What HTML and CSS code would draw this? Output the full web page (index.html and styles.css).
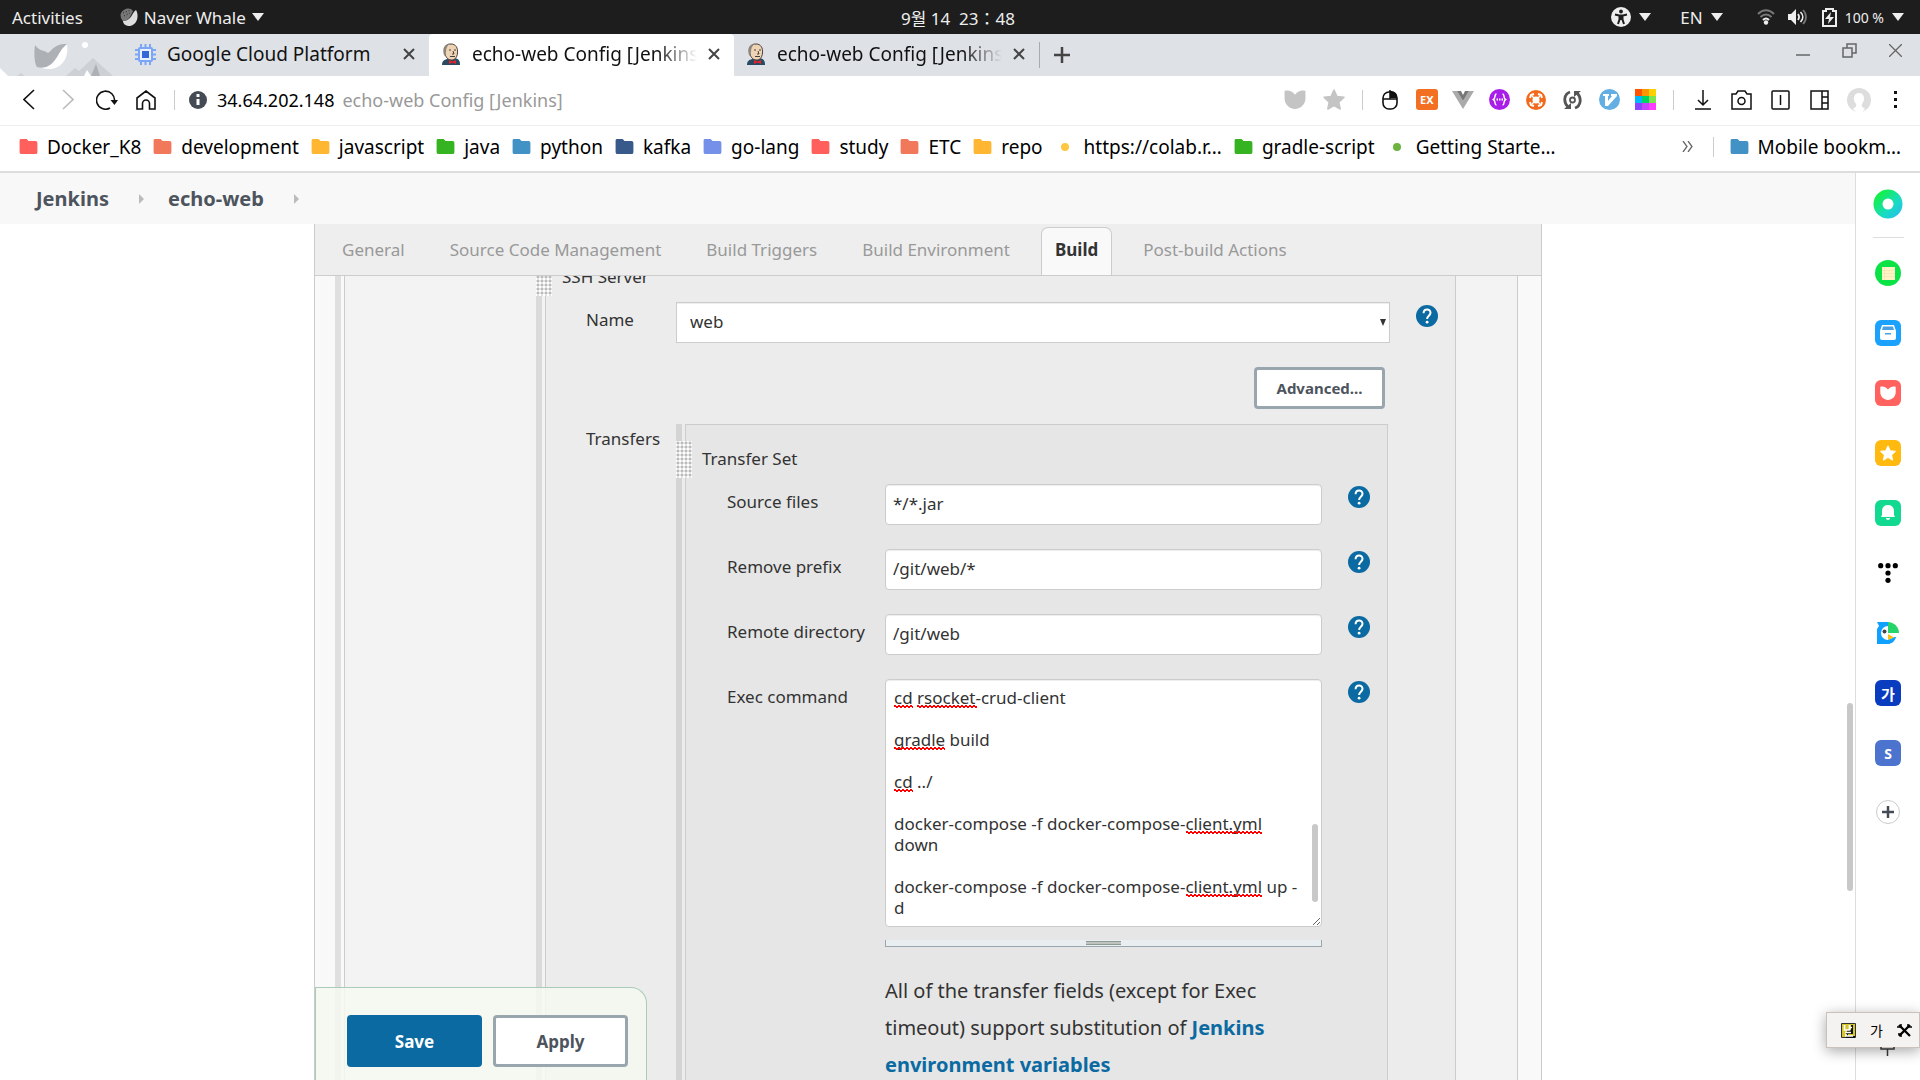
FILE: index.html
```html
<!DOCTYPE html>
<html lang="en">
<head>
  <meta charset="UTF-8" />
  <meta name="viewport" content="width=device-width, initial-scale=1.0"/>
  <title>echo-web Config [Jenkins]</title>
  <link rel="stylesheet" href="styles.css">
</head>
<body>

  <!-- shared icons -->
  <svg class="sprite" aria-hidden="true">
    <symbol id="folder" viewBox="0 0 19 16"><path fill="currentColor" d="M1.500 0h6l2 2h7.500a2 2 0 0 1 2 2v10a2 2 0 0 1-2 2H2a2 2 0 0 1-2-2V1.500A1.500 1.500 0 0 1 1.500 0z"/></symbol>
    <symbol id="caret" viewBox="0 0 12 8"><path fill="currentColor" d="M0 0h12L6 8z"/></symbol>
    <symbol id="cross" viewBox="0 0 12 12"><path fill="none" stroke="currentColor" stroke-width="2" d="M1 1l10 10M11 1L1 11"/></symbol>
    <symbol id="crumb" viewBox="0 0 5 10"><path fill="#bbb" d="M0 0l5 5-5 5z"/></symbol>
    <symbol id="help" viewBox="0 0 22 22"><circle cx="11" cy="11" r="11" fill="#0b6aa2"/><path fill="none" stroke="#fff" stroke-width="2" d="M7.600 8.200C7.600 3.300 14.500 3.400 14.500 7.700c0 3-3.400 3.100-3.400 6.300"/><circle cx="11.100" cy="17.200" r="1.400" fill="#fff"/></symbol>
    <symbol id="jenkins" viewBox="0 0 20 22">
      <path fill="#284a63" d="M1 22c0-4 2-5 5-6l8-1c4 1 5 3 5 7z"/>
      <path fill="#eed3b5" stroke="#4a4038" d="M3.500 9C3 3 6 1 10 1c5 0 7 4 6.500 9-.5 5-3 7-6 7-4 0-6-3-7-8z"/>
      <path fill="#8c857c" d="M3 12C1 6 3 1 9 .5 6 3 5 5 5 9l-1 4z"/>
      <path fill="none" stroke="#4a4038" d="M8 7h2M13 7h2M12 8l1 3h-2M9 13.500h5"/>
      <path fill="#e3252b" d="M8 17l3.500 1.500L15 17v4l-3.500-1.500L8 21z"/>
    </symbol>
    <symbol id="shield" viewBox="0 0 22 20"><path fill="currentColor" d="M0 1c4-1 8 0 11 4 3-4 7-5 11-4v8c0 6-5 11-11 11S0 15 0 9z"/></symbol>
    <symbol id="star" viewBox="0 0 22 21"><path fill="currentColor" stroke="currentColor" stroke-linejoin="round" stroke-width="1.500" d="M11 1l3 6.500 7 .8-5.200 4.800L17.200 20 11 16.500 4.800 20l1.400-6.900L1 8.300l7-.8z"/></symbol>
  </svg>

  <!-- desktop top bar -->
  <header class="topbar">
    <div class="topbar-left">
      <span>Activities</span>
      <span class="topbar-app">
        <svg width="18" height="18" viewBox="0 0 18 18"><path fill="#777" d="M1 5C4 0 10-1 13 3l-3 6c-2 3-5 4-7 4C1 11 0 8 1 5z"/><path fill="#ddd" d="M10 10c2-2 3-6 6-8 3 5 2 14-6 16-4 0-7-2-7-5 3 0 5-1 7-3z"/><path stroke="#222" stroke-dasharray="1 2" d="M3 5l8-3M4 8l6-3"/></svg>
        Naver Whale
        <svg class="caret" width="12" height="8"><use href="#caret"/></svg>
      </span>
    </div>
    <div class="topbar-clock" lang="ko">9월 14&nbsp; 23：48</div>
    <div class="topbar-right">
      <svg width="20" height="20" viewBox="0 0 20 20"><circle cx="10" cy="10" r="10" fill="#eee"/><circle cx="10" cy="4.500" r="1.900" fill="#1d1d1d"/><path fill="none" stroke="#1d1d1d" stroke-width="2" d="M4 7.500l4 1h4l4-1M8.500 8.500v4L7 17M11.500 8.500v4L13 17M10 8v5"/></svg>
      <svg class="caret" width="12" height="8"><use href="#caret"/></svg>
      <span class="lang">EN</span>
      <svg class="caret" width="12" height="8"><use href="#caret"/></svg>
      <svg class="wifi" width="18" height="16" viewBox="0 0 18 16"><g fill="none" stroke-width="2"><path stroke="#777" d="M1 5c5-5 11-5 16 0"/><path stroke="#777" d="M3.500 8c3.500-3.500 7.500-3.500 11 0"/><path stroke="#eee" d="M6 11c2-2 4-2 6 0"/></g><circle cx="9" cy="13.500" r="2.200" fill="#eee"/></svg>
      <svg class="volume" width="19" height="16" viewBox="0 0 19 16"><path fill="#eee" d="M0 5h3l5-5v16l-5-5H0z"/><g fill="none" stroke-width="1.700"><path stroke="#eee" d="M10 5c1.500 2 1.500 4 0 6M12.500 3c3 3 3 7 0 10"/><path stroke="#777" d="M15 1c4 4 4 10 0 14"/></g></svg>
      <svg class="battery" width="15" height="19" viewBox="0 0 15 19"><path fill="none" stroke="#eee" stroke-width="2" d="M1 3h3V1h7v2h3v15H1z"/><path fill="#eee" d="M9 4l-6 7h4l-1 5 6-7H8z"/></svg>
      <span class="percent">100 %</span>
      <svg class="caret" width="12" height="8"><use href="#caret"/></svg>
    </div>
  </header>

  <!-- browser tabs -->
  <div class="tabstrip">
    <svg class="whale" width="114" height="42" viewBox="0 0 114 42">
      <path fill="#fff" d="M0 34l8 8H0z"/><path fill="#cdd0d4" d="M17 42l4-3 4 3zM66 42l9-8 4 3 14-13 20 18z"/>
      <path fill="#adb0b5" d="M91 42l5-12 4 12z"/><path fill="#fff" d="M84 42l3-6 4 6z"/>
      <circle cx="85" cy="11" r="3" fill="#fff"/>
      <path fill="#fff" d="M67 10c2 13-4 24-17 25-6 0-10-1-13-3l16-8z"/>
      <path fill="#adb0b5" d="M35 11c4 6 9 5 13 8 5-4 8-10 19-9-6 4-8 11-12 16-5 7-12 9-18 7-3-5-3-15-2-22z"/>
    </svg>
    <div class="tab tab-first">
      <svg width="21" height="21" viewBox="0 0 21 21"><path stroke="#7ba5f5" stroke-width="2" d="M6 0v21M10.500 0v21M15 0v21M0 6h21M0 10.500h21M0 15h21"/><rect x="3" y="3" width="15" height="15" rx="2" fill="#7ba5f5"/><rect x="5" y="5" width="11" height="11" fill="#e8f0ff"/><rect x="7" y="7" width="7" height="7" fill="#3367d6"/></svg>
      <span class="tab-title">Google Cloud Platform</span>
      <button class="tab-close" aria-label="Close tab"><svg width="12" height="12"><use href="#cross"/></svg></button>
    </div>
    <div class="tab active">
      <svg width="20" height="22"><use href="#jenkins"/></svg>
      <span class="tab-title fade">echo-web Config [Jenkins]</span>
      <button class="tab-close" aria-label="Close tab"><svg width="12" height="12"><use href="#cross"/></svg></button>
    </div>
    <div class="tab">
      <svg width="20" height="22"><use href="#jenkins"/></svg>
      <span class="tab-title fade">echo-web Config [Jenkins]</span>
      <button class="tab-close" aria-label="Close tab"><svg width="12" height="12"><use href="#cross"/></svg></button>
    </div>
    <button class="new-tab" aria-label="New tab"><svg width="16" height="16" viewBox="0 0 16 16"><path stroke="#444" stroke-width="2.500" d="M8 0v16M0 8h16"/></svg></button>
    <div class="window-buttons">
      <button aria-label="Minimize"><svg width="14" height="14" viewBox="0 0 14 14"><path stroke="#666" stroke-width="1.500" d="M0 12h14"/></svg></button>
      <button aria-label="Restore"><svg width="15" height="15" viewBox="0 0 15 15"><path fill="none" stroke="#666" stroke-width="1.500" d="M1 5h9v9H1zM5 5V1h9v9h-4"/></svg></button>
      <button aria-label="Close"><svg width="13" height="13" viewBox="0 0 13 13"><path stroke="#666" stroke-width="1.300" d="M0 0l13 13M13 0L0 13"/></svg></button>
    </div>
  </div>

  <!-- address bar -->
  <nav class="navbar">
    <button aria-label="Back"><svg width="12" height="21" viewBox="0 0 12 21"><path fill="none" stroke="#111" stroke-width="1.600" d="M11 1L1 10.500 11 20"/></svg></button>
    <button aria-label="Forward"><svg width="12" height="21" viewBox="0 0 12 21"><path fill="none" stroke="#bbb" stroke-width="1.600" d="M1 1l10 9.500L1 20"/></svg></button>
    <button aria-label="Reload"><svg width="22" height="20" viewBox="0 0 22 20"><path fill="none" stroke="#111" stroke-width="1.600" d="M14 18A9 9 0 1 1 18.500 11"/><path fill="#111" d="M14.500 10H22l-3.500 5z"/></svg></button>
    <button aria-label="Home"><svg width="20" height="20" viewBox="0 0 20 20"><path fill="none" stroke="#111" stroke-width="1.600" d="M1 8l9-7 9 7v11h-5.500v-5.500a3.500 3.500 0 0 0-7 0V19H1z"/></svg></button>
    <span class="divider"></span>
    <svg class="info" width="18" height="18" viewBox="0 0 18 18"><circle cx="9" cy="9" r="9" fill="#444b54"/><path stroke="#fff" stroke-width="3" d="M9 3v3M9 8v6"/></svg>
    <a class="host" href="#">34.64.202.148</a>
    <span class="page-title">echo-web Config [Jenkins]</span>
    <div class="nav-marks">
      <button aria-label="Safe browsing"><svg width="22" height="19"><use href="#shield"/></svg></button>
      <button aria-label="Bookmark page"><svg width="22" height="21"><use href="#star"/></svg></button>
    </div>
    <span class="divider"></span>
    <div class="extensions">
      <button aria-label="Mouse gesture"><svg width="16" height="20" viewBox="0 0 16 20"><path fill="#111" d="M8 1c5 0 7 2 7 7H8z"/><rect x="1" y="2" width="14" height="17" rx="6" fill="none" stroke="#111" stroke-width="1.600"/><path stroke="#111" stroke-width="1.500" d="M1 9h14M8 0v9"/></svg></button>
      <button class="ext-ex">EX</button>
      <button aria-label="Vue"><svg width="22" height="18" viewBox="0 0 22 18"><path fill="#aaa" d="M0 0h5l6 10 6-10h5L11 18z"/><path fill="#777" d="M5 0h4l2 4 2-4h4l-6 10z"/></svg></button>
      <button aria-label="GraphQL"><svg width="21" height="21" viewBox="0 0 21 21"><circle cx="10.500" cy="10.500" r="10.500" fill="#a81ee8"/><path fill="none" stroke="#fff" stroke-width="1.500" d="M7.500 5C5 5 7 9 4.500 10.500 7 12 5 16 7.500 16M13.500 5c2.500 0 .5 4 3 5.500-2.500 1.500-.5 5.500-3 5.500"/><path stroke="#fff" stroke-width="2" d="M7.500 10.500h1.500M10 10.500h1.500M12.500 10.500H14"/></svg></button>
      <button aria-label="Hub"><svg width="20" height="20" viewBox="0 0 20 20"><circle cx="10" cy="10" r="10" fill="#f26b1d"/><circle cx="10" cy="10" r="3.500" fill="#fff"/><path stroke="#fff" stroke-width="1.300" d="M6 6l8 8M14 6l-8 8"/><path fill="none" stroke="#fff" stroke-width="2" d="M4 8l1-3 3-1M12 4l3 1 1 3M16 12l-1 3-3 1M8 16l-3-1-1-3"/></svg></button>
      <button aria-label="Sync"><svg width="19" height="20" viewBox="0 0 19 20"><path fill="none" stroke="#555" stroke-width="2.800" d="M7 2C1 4 0 12 5 17M12 18c6-2 7-10 2-15"/><path fill="#555" d="M1 19h7v-6zM18 1h-7v6z"/><circle cx="9.500" cy="10" r="2.500" fill="none" stroke="#555" stroke-width="1.800"/></svg></button>
      <button aria-label="Vimium"><svg width="21" height="21" viewBox="0 0 21 21"><circle cx="10.500" cy="10.500" r="10.500" fill="#63aee3"/><path fill="#fff" d="M4 5h6v2H9v5l4-5h-1V5h6v2L9 17H6V7H4z"/></svg></button>
      <button aria-label="Color picker"><svg width="21" height="21" viewBox="0 0 21 21"><path fill="#ff5500" d="M0 0h7v7H0z"/><path fill="#ff9500" d="M7 0h7v7H7z"/><path fill="#ffd000" d="M14 0h7v7h-7z"/><path fill="#00b8ff" d="M0 7h7v7H0z"/><path fill="#00d564" d="M7 7h7v7H7z"/><path fill="#7de34f" d="M14 7h7v7h-7z"/><path fill="#8844ff" d="M0 14h7v7H0z"/><path fill="#c542ff" d="M7 14h7v7H7z"/><path fill="#ff3dff" d="M14 14h7v7h-7z"/></svg></button>
    </div>
    <span class="divider"></span>
    <div class="tools">
      <button aria-label="Downloads"><svg width="18" height="20" viewBox="0 0 18 20"><path fill="none" stroke="#111" stroke-width="1.500" d="M9 0v15M4 10l5 5 5-5M1 19h16"/></svg></button>
      <button aria-label="Capture"><svg width="21" height="20" viewBox="0 0 21 20"><path fill="none" stroke="#111" stroke-width="1.500" d="M1 4h4l2-3h7l2 3h4v15H1z"/><circle cx="10.500" cy="11" r="3.500" fill="none" stroke="#111" stroke-width="1.500"/></svg></button>
      <button aria-label="Split"><svg width="19" height="20" viewBox="0 0 19 20"><rect x="1" y="1" width="17" height="18" rx="1" fill="none" stroke="#111" stroke-width="1.500"/><path stroke="#111" stroke-width="1.500" d="M9.500 5v10"/></svg></button>
      <button aria-label="Sidebar"><svg width="19" height="20" viewBox="0 0 19 20"><path fill="none" stroke="#111" stroke-width="1.500" d="M1 1h11v18H1zM12 1h6v18h-6M12 7h6M12 13h6"/></svg></button>
      <button aria-label="Profile"><svg width="24" height="24" viewBox="0 0 24 24"><circle cx="12" cy="12" r="12" fill="#ddd"/><path fill="#fff" d="M6 21c1-2 4-1 3-5-4-5-2-11 3-11s7 6 3 11c-1 4 2 3 3 5l-3 3H9z"/></svg></button>
      <button class="more" aria-label="Menu"><svg width="4" height="18" viewBox="0 0 4 18"><path fill="#111" d="M0 0h3v3H0zM0 7h3v3H0zM0 14h3v3H0z"/></svg></button>
    </div>
  </nav>

  <!-- bookmarks -->
  <div class="bookmarks">
    <a href="#"><svg class="red" width="19" height="15"><use href="#folder"/></svg>Docker_K8</a>
    <a href="#"><svg class="coral" width="19" height="15"><use href="#folder"/></svg>development</a>
    <a href="#"><svg class="amber" width="19" height="15"><use href="#folder"/></svg>javascript</a>
    <a href="#"><svg class="green" width="19" height="15"><use href="#folder"/></svg>java</a>
    <a href="#"><svg class="blue" width="19" height="15"><use href="#folder"/></svg>python</a>
    <a href="#"><svg class="navy" width="19" height="15"><use href="#folder"/></svg>kafka</a>
    <a href="#"><svg class="indigo" width="19" height="15"><use href="#folder"/></svg>go-lang</a>
    <a href="#"><svg class="red" width="19" height="15"><use href="#folder"/></svg>study</a>
    <a href="#"><svg class="coral" width="19" height="15"><use href="#folder"/></svg>ETC</a>
    <a href="#"><svg class="amber" width="19" height="15"><use href="#folder"/></svg>repo</a>
    <a href="#"><span class="dot dot-yellow"></span>https://colab.r…</a>
    <a href="#"><svg class="green" width="19" height="15"><use href="#folder"/></svg>gradle-script</a>
    <a href="#"><span class="dot dot-green"></span>Getting Starte…</a>
    <button class="overflow" aria-label="More bookmarks"><svg width="11" height="11" viewBox="0 0 11 11"><path fill="none" stroke="#666" stroke-width="1.300" d="M1 0l4 5.500L1 11M6 0l4 5.500L6 11"/></svg></button>
    <span class="divider"></span>
    <a href="#"><svg class="blue" width="19" height="15"><use href="#folder"/></svg>Mobile bookm…</a>
  </div>

  <div class="window">
    <div class="page">
      <div class="breadcrumb">
        <a href="#">Jenkins</a>
        <svg width="5" height="10"><use href="#crumb"/></svg>
        <a href="#">echo-web</a>
        <svg width="5" height="10"><use href="#crumb"/></svg>
      </div>

      <main class="config">
        <div class="config-tabs">
          <a href="#">General</a>
          <a href="#">Source Code Management</a>
          <a href="#">Build Triggers</a>
          <a href="#">Build Environment</a>
          <a href="#" class="active">Build</a>
          <a href="#">Post-build Actions</a>
        </div>

        <form class="config-body">
          <div class="chunk chunk-step">
            <div class="chunk-inner">

              <div class="chunk chunk-server">
                <span class="handle"></span>
                <div class="chunk-inner">
                  <div class="server-title">SSH Server</div>
                  <div class="row">
                    <label for="name">Name</label>
                    <div class="select-wrap">
                      <select id="name"><option>web</option></select>
                    </div>
                    <a class="help" href="#" aria-label="Help: Name"><svg width="22" height="22"><use href="#help"/></svg></a>
                  </div>
                  <div class="advanced">
                    <button type="button">Advanced...</button>
                  </div>

                  <div class="row row-transfers">
                    <div class="row-label">Transfers</div>
                    <div class="chunk chunk-transfer">
                      <span class="handle"></span>
                      <div class="chunk-inner">
                        <div class="transfer-title">Transfer Set</div>
                        <div class="row">
                          <label for="source">Source files</label>
                          <input id="source" type="text" value="*/*.jar">
                          <a class="help" href="#" aria-label="Help: Source files"><svg width="22" height="22"><use href="#help"/></svg></a>
                        </div>
                        <div class="row">
                          <label for="prefix">Remove prefix</label>
                          <input id="prefix" type="text" value="/git/web/*">
                          <a class="help" href="#" aria-label="Help: Remove prefix"><svg width="22" height="22"><use href="#help"/></svg></a>
                        </div>
                        <div class="row">
                          <label for="remote">Remote directory</label>
                          <input id="remote" type="text" value="/git/web">
                          <a class="help" href="#" aria-label="Help: Remote directory"><svg width="22" height="22"><use href="#help"/></svg></a>
                        </div>
                        <div class="row">
                          <label for="exec">Exec command</label>
                          <div class="exec">
                            <div class="exec-box">
                              <textarea id="exec" spellcheck="false">cd rsocket-crud-client

gradle build

cd ../

docker-compose -f docker-compose-client.yml down

docker-compose -f docker-compose-client.yml up -d</textarea>
                              <!-- spelling marks -->
                              <i class="typo typo-cd1"></i>
                              <i class="typo typo-rsocket"></i>
                              <i class="typo typo-gradle"></i>
                              <i class="typo typo-cd2"></i>
                              <i class="typo typo-yml1"></i>
                              <i class="typo typo-yml2"></i>
                              <i class="exec-thumb"></i>
                            </div>
                            <div class="resizer"><span></span></div>
                            <p>All of the transfer fields (except for Exec timeout) support substitution of <a href="#">Jenkins environment variables</a></p>
                          </div>
                          <a class="help" href="#" aria-label="Help: Exec command"><svg width="22" height="22"><use href="#help"/></svg></a>
                        </div>
                      </div>
                    </div>
                  </div>
                </div>
              </div>

            </div>
          </div>
        </form>

        <div class="save-bar">
          <button class="save">Save</button>
          <button class="apply">Apply</button>
        </div>
      </main>

      <span class="page-thumb"></span>
    </div>

    <!-- whale side bar -->
    <aside class="sidebar">
      <button aria-label="Green dot"><svg width="30" height="30" viewBox="0 0 30 30"><defs><linearGradient id="ring" x1="0" y1="0" x2="1" y2="1"><stop offset=".2" stop-color="#14ee4e"/><stop offset=".6" stop-color="#18dcc0"/><stop offset="1" stop-color="#28b8f8"/></linearGradient></defs><circle cx="15" cy="15" r="14.500" fill="url(#ring)"/><circle cx="15" cy="15" r="5.500" fill="#fff"/></svg></button>
      <hr>
      <button aria-label="Memo"><svg width="26" height="26" viewBox="0 0 26 26"><circle cx="13" cy="13" r="13" fill="#0be246"/><rect x="7" y="7" width="13" height="13" fill="#fdf3c4"/><path stroke="#efe3b0" stroke-width=".6" d="M9.500 7v13M7 10.500h13M7 13.500h13M7 16.500h13"/></svg></button>
      <button aria-label="Drawer"><svg width="26" height="26" viewBox="0 0 26 26"><rect width="26" height="26" rx="6" fill="#1ba2ff"/><path fill="#fff" d="M7 5h12l2 6v7a2 2 0 0 1-2 2H7a2 2 0 0 1-2-2v-7z"/><path fill="#4a9fe0" d="M8 6.500h10l1 3.500H7zM10 13h6v1.500h-6z"/></svg></button>
      <button class="cat" aria-label="Shield"><svg width="16" height="14"><use href="#shield"/></svg></button>
      <button class="fav" aria-label="Favorites"><svg width="16" height="16"><use href="#star"/></svg></button>
      <button aria-label="Alerts"><svg width="26" height="26" viewBox="0 0 26 26"><rect width="26" height="26" rx="6" fill="#12d990"/><path fill="#fff" d="M13 5c4 0 6 2.500 6 6v4l1 2H6l1-2v-4c0-3.500 2-6 6-6zM11 18h4a2 2 0 0 1-4 0z"/></svg></button>
      <button aria-label="Tving"><svg width="20" height="20" viewBox="0 0 20 20"><circle cx="2.700" cy="2.700" r="2.600"/><circle cx="10" cy="2.700" r="2.600"/><circle cx="17.300" cy="2.700" r="2.600"/><circle cx="10" cy="10" r="2.600"/><circle cx="10" cy="17.300" r="2.600"/></svg></button>
      <button aria-label="Papago"><svg width="22" height="22" viewBox="0 0 22 22"><path fill="#10a0ff" d="M0 0h11v16l8-1c-2 5-5 7-9 7H0V7l2-3z"/><circle cx="11" cy="11" r="7" fill="#fff"/><path fill="#25d46a" d="M11 0c6 0 11 5 11 11H11z"/><path fill="#ffbe0b" d="M11 12l6 3.500-6 2.500z"/><path fill="#10a0ff" d="M11 18l8-3c-2 5-5 7-9 7z"/><circle cx="7.500" cy="9.500" r="2" fill="#3d4550"/></svg></button>
      <button class="dict" lang="ko">가</button>
      <button class="ess">S</button>
      <button class="plus" aria-label="Add"><svg width="12" height="12" viewBox="0 0 12 12"><path stroke="#444b54" stroke-width="2.500" d="M6 0v12M0 6h12"/></svg></button>
    </aside>
  </div>

  <!-- input method panel -->
  <div class="ime">
    <svg width="15" height="15" viewBox="0 0 15 15"><path fill="#d4c62c" stroke="#333" d="M.5.500h14v14H.5z"/><path fill="none" stroke="#111" stroke-width="2" d="M6 8h5v2H6v4h8M11 2v5"/><path fill="none" stroke="#fff" stroke-width="1.700" d="M3.500 2v5h5V2M8.500 4.500H11M4 9.500h6M5 11v2h7"/></svg>
    <span lang="ko">가</span>
    <svg width="15" height="15" viewBox="0 0 15 15"><path stroke="#000" stroke-width="2.300" d="M2 2l11 11M13 2L2 13"/><path fill="none" stroke="#000" stroke-width="1.500" d="M4 1v3H0M11 1v3h4M1 11h3v3"/></svg>
  </div>
  <svg class="ime-shadow-icon" width="16" height="10" viewBox="0 0 16 10"><path fill="none" stroke="#333" stroke-width="1.500" d="M1 0v2h13V0M7.500 2v7"/></svg>

</body>
</html>
```
FILE: styles.css
```css
* {
  box-sizing: border-box;
}

body {
  margin: 0;
  height: 100vh;
  display: flex;
  flex-direction: column;
  overflow: hidden;
  font-family: "Noto Sans", "Noto Sans CJK KR", sans-serif;
  font-size: 17px;
  color: #333;
  background: #fff;
}

a {
  color: inherit;
  text-decoration: none;
}

button {
  font-family: inherit;
  color: inherit;
  padding: 0;
  border: none;
  background: none;
  display: flex;
  align-items: center;
  justify-content: center;
}

svg {
  flex: none;
  display: block;
}

.sprite {
  position: absolute;
  width: 0;
  height: 0;
}

.divider {
  flex: none;
  width: 1px;
  height: 20px;
  background: #ccc;
}

/* desktop top bar */
.topbar {
  height: 34px;
  flex: none;
  display: grid;
  grid-template-columns: 1fr auto 1fr;
  align-items: center;
  padding: 0 16px 0 12px;
  background: #1d1d1d;
  color: #eee;
}

.topbar-left,
.topbar-app,
.topbar-right {
  display: flex;
  align-items: center;
}

.topbar-left {
  gap: 37px;
}

.topbar-app {
  gap: 6px;
}

.topbar-right {
  justify-content: flex-end;
}

.topbar-right .caret {
  margin-left: 8px;
}

.lang {
  margin-left: 29px;
}

.wifi {
  margin-left: 34px;
}

.volume {
  margin-left: 13px;
}

.battery {
  margin: 0 8px 0 15px;
}

.percent {
  font-size: 14px;
}

/* browser tabs */
.tabstrip {
  height: 42px;
  flex: none;
  display: flex;
  align-items: center;
  background: #dee1e6;
  font-size: 19px;
  color: #111;
}

.tab {
  width: 305px;
  height: 42px;
  display: flex;
  align-items: center;
  gap: 11px;
  padding: 0 14px 2px 12px;
}

.tab-first {
  width: 315px;
  padding-left: 21px;
}

.tab.active {
  background: #fff;
  border-radius: 4px 4px 0 0;
}

.tab-title {
  flex: 1;
  white-space: nowrap;
  overflow: hidden;
}

.tab-title.fade {
  -webkit-mask-image: linear-gradient(to left, transparent, #000 40px);
  mask-image: linear-gradient(to left, transparent, #000 40px);
}

.tab-close {
  color: #444;
}

.new-tab {
  height: 26px;
  padding: 0 14px;
  border-left: 1px solid #aaa;
}

.window-buttons {
  margin-left: auto;
  display: flex;
  padding: 0 2px 10px 0;
}

.window-buttons button {
  width: 46px;
}

/* address bar */
.navbar {
  height: 50px;
  flex: none;
  display: flex;
  align-items: center;
  padding: 0 6px 2px 9px;
  border-bottom: 1px solid #eee;
}

.navbar > button {
  width: 39px;
  height: 32px;
}

.navbar > .divider {
  margin: 0 9px;
}

.info {
  margin: 0 10px 0 5px;
}

.host {
  color: #000;
  font-size: 18px;
}

.page-title {
  margin-left: 8px;
  color: #999;
  font-size: 18px;
}

.nav-marks {
  margin-left: auto;
  display: flex;
  color: #c4c4c4;
}

.nav-marks button,
.tools button {
  width: 39px;
}

.extensions {
  width: 292px;
  display: grid;
  grid-template-columns: repeat(8, 1fr);
  justify-items: center;
  align-items: center;
}

.ext-ex {
  width: 22px;
  height: 21px;
  border-radius: 3px;
  background: #f36f21;
  color: #fff;
  font-size: 11px;
  font-weight: bold;
}

.tools {
  display: flex;
}

.tools .more {
  width: 36px;
}

/* bookmarks */
.bookmarks {
  height: 47px;
  flex: none;
  display: flex;
  align-items: center;
  gap: 12px;
  padding: 0 19px 4px;
  border-bottom: 2px solid #ddd;
  font-size: 19px;
  color: #000;
  white-space: nowrap;
}

.bookmarks a {
  display: flex;
  align-items: center;
  gap: 9px;
}

.bookmarks .overflow {
  margin-left: auto;
}

.bookmarks .divider {
  margin: 0 4px 0 8px;
}

.red { color: #ff605c; }
.coral { color: #f2785c; }
.amber { color: #ffb733; }
.green { color: #35b320; }
.blue { color: #4292c6; }
.navy { color: #375a8a; }
.indigo { color: #7490e8; }

.dot {
  width: 8px;
  height: 8px;
  margin: 0 6px;
  border-radius: 50%;
}

.dot-yellow { background: #ffc642; }
.dot-green { background: #6cb33f; }

/* web page */
.window {
  flex: 1;
  min-height: 0;
  display: flex;
}

.page {
  flex: 1;
  display: flex;
  flex-direction: column;
  position: relative;
}

.breadcrumb {
  height: 51px;
  flex: none;
  display: flex;
  align-items: center;
  gap: 30px;
  padding: 0 36px;
  background: #f8f8f8;
  color: #4d545d;
  font-size: 20px;
  font-weight: bold;
}

.breadcrumb a + svg {
  margin-right: -6px;
}

.config {
  flex: 1;
  min-height: 0;
  display: flex;
  flex-direction: column;
  position: relative;
  margin: 0 313px 0 314px;
  border: solid #ccc;
  border-width: 0 1px;
  background: #f9f9f9;
}

.config-tabs {
  height: 52px;
  flex: none;
  display: flex;
  align-items: flex-end;
  gap: 17px;
  padding: 0 13px;
  border-bottom: 1px solid #ccc;
  background: #eee;
  color: #999;
}

.config-tabs a {
  height: 48px;
  padding: 0 13px;
  border: 1px solid transparent;
  border-bottom: none;
  line-height: 44px;
}

.config-tabs .active {
  border-color: #ccc;
  border-radius: 7px 7px 0 0;
  background: #f9f9f9;
  color: #333;
  font-weight: bold;
}

.config-body {
  flex: 1;
  min-height: 0;
  display: flex;
  overflow: hidden;
}

/* repeatable blocks, each with a drag bar at the left */
.chunk {
  position: relative;
  display: flex;
  flex: 1;
  padding-left: 3px;
  border-left: 6px solid rgba(0, 0, 0, 0.1);
}

.chunk-inner {
  flex: 1;
  min-width: 0;
  border: solid #ccc;
  border-width: 0 1px;
}

.chunk-step {
  margin: 0 23px 0 20px;
}

.chunk-step > .chunk-inner {
  display: flex;
  background: #f3f3f3;
}

.chunk-server {
  margin: 0 61px 0 191px;
}

.chunk-server > .chunk-inner {
  padding-left: 40px;
  background: #ececec;
}

.chunk-transfer > .chunk-inner {
  padding: 21px 0 40px 41px;
  border-top-width: 1px;
  background: #e6e6e6;
}

.handle {
  position: absolute;
  top: 17px;
  left: -6px;
  width: 16px;
  height: 37px;
  background: radial-gradient(circle at 2px 2px, #bbb 1px, #fff 2px) 0 0 / 4px 4px;
}

.chunk-server > .handle {
  top: -17px;
}

.server-title {
  margin: -11px 0 13px -24px;
  line-height: 24px;
}

.row {
  display: grid;
  grid-template-columns: 90px 1fr 65px;
}

.row label {
  line-height: 36px;
}

.row-label {
  line-height: 30px;
}

.help {
  padding: 3px 0 0 26px;
}

input,
select,
textarea {
  display: block;
  width: 100%;
  height: 41px;
  padding: 0 7px 2px;
  border: 1px solid #ccc;
  border-radius: 4px;
  background: #fff;
  box-shadow: inset 0 1px 1px rgba(0, 0, 0, 0.075);
  color: #333;
  font-family: inherit;
  font-size: 17px;
  outline: none;
}

.select-wrap {
  position: relative;
}

.select-wrap::after {
  content: "";
  position: absolute;
  top: 17px;
  right: 4px;
  border: solid transparent;
  border-width: 7px 3px 0;
  border-top-color: #333;
}

select {
  padding: 0 13px 2px;
  border-radius: 0;
  appearance: none;
}

.advanced {
  display: flex;
  justify-content: flex-end;
  padding: 24px 70px 15px 0;
}

.advanced button {
  width: 131px;
  height: 42px;
  border: 3px solid #9aa6ae;
  border-radius: 4px;
  background: #fff;
  color: #4d545d;
  font-size: 15px;
  font-weight: bold;
}

.row-transfers {
  grid-template-columns: 90px 1fr 67px;
}

.transfer-title {
  margin: 0 0 12px -25px;
  line-height: 26px;
}

.chunk-transfer .row {
  grid-template-columns: 158px 1fr 65px;
  margin-bottom: 24px;
}

.chunk-transfer .help {
  padding-top: 2px;
}

.exec-box {
  position: relative;
}

textarea {
  height: 248px;
  padding: 7px 14px 7px 8px;
  line-height: 21px;
  resize: vertical;
  overflow: hidden;
}

/* red wave under a misspelt word */
.typo {
  position: absolute;
  left: 9px;
  width: 19px;
  height: 3px;
  background:
    linear-gradient(45deg, transparent 35%, #f00 35% 65%, transparent 65%) 0 0 / 4px 3px,
    linear-gradient(-45deg, transparent 35%, #f00 35% 65%, transparent 65%) 2px 0 / 4px 3px;
}

.typo-cd1 { top: 26px; }
.typo-rsocket { top: 26px; left: 32px; width: 60px; }
.typo-gradle { top: 68px; width: 51px; }
.typo-cd2 { top: 110px; }
.typo-yml1 { top: 152px; left: 301px; width: 76px; }
.typo-yml2 { top: 215px; left: 301px; width: 76px; }

.exec-thumb {
  position: absolute;
  top: 145px;
  right: 4px;
  width: 6px;
  height: 78px;
  border-radius: 3px;
  background: #c8c8c8;
}

.resizer {
  height: 7px;
  margin-top: 13px;
  padding-top: 1px;
  border: 1px solid #9aa6ae;
  border-top: none;
  background: #e9eef0;
}

.resizer span {
  display: block;
  width: 35px;
  height: 4px;
  margin: 0 auto;
  border: solid #8f9a95;
  border-width: 1px 0;
  background: #bfc4c0;
}

.exec p {
  margin: 25px 0 0;
  font-size: 20px;
  line-height: 37px;
}

.exec p a {
  color: #0b6aa2;
  font-weight: bold;
}

.save-bar {
  position: absolute;
  left: 0;
  bottom: 0;
  height: 93px;
  display: flex;
  gap: 11px;
  padding: 27px 18px 0 31px;
  border: 1px solid #aacabb;
  border-bottom: none;
  border-radius: 0 16px 0 0;
  background: rgba(245, 249, 240, 0.85);
}

.save-bar button {
  width: 135px;
  height: 52px;
  border-radius: 4px;
  font-size: 17px;
  font-weight: bold;
}

.save-bar .save {
  background: #0b6aa2;
  color: #fff;
}

.save-bar .apply {
  border: 3px solid #9aa6ae;
  background: #fff;
  color: #4d545d;
}

.page-thumb {
  position: absolute;
  top: 530px;
  right: 2px;
  width: 6px;
  height: 188px;
  border-radius: 3px;
  background: #c8c8c8;
}

/* side bar */
.sidebar {
  width: 65px;
  flex: none;
  display: flex;
  flex-direction: column;
  align-items: center;
  gap: 34px;
  padding-top: 16px;
  border-left: 1px solid #ddd;
}

.sidebar hr {
  width: 31px;
  margin: -16px 0 -12px;
  border: none;
  border-top: 1px solid #ddd;
}

.sidebar button {
  height: 26px;
}

.sidebar button:first-child {
  height: 30px;
}

.sidebar .cat,
.sidebar .fav,
.sidebar .dict,
.sidebar .ess {
  width: 26px;
  border-radius: 6px;
  color: #fff;
}

.sidebar .cat { background: #ff625f; }
.sidebar .fav { background: #ffb90f; }

.sidebar .dict {
  background: #0a3cc0;
  font-size: 15px;
  font-weight: bold;
}

.sidebar .ess {
  background: #4c74ce;
  font-size: 14px;
  font-weight: bold;
}

.sidebar .plus {
  width: 24px;
  height: 24px;
  border: 1px solid #ccc;
  border-radius: 50%;
}

/* floating input method panel */
.ime {
  position: absolute;
  right: 0;
  bottom: 32px;
  z-index: 2;
  width: 94px;
  height: 36px;
  display: flex;
  align-items: center;
  justify-content: space-between;
  padding: 0 7px 0 14px;
  border: 1px solid #c8c2bb;
  background: #f5f3f1;
  box-shadow: 0 3px 14px rgba(0, 0, 0, 0.35);
  color: #000;
  font-size: 14px;
}

.ime-shadow-icon {
  position: absolute;
  right: 24px;
  bottom: 23px;
  z-index: 3;
}
```
